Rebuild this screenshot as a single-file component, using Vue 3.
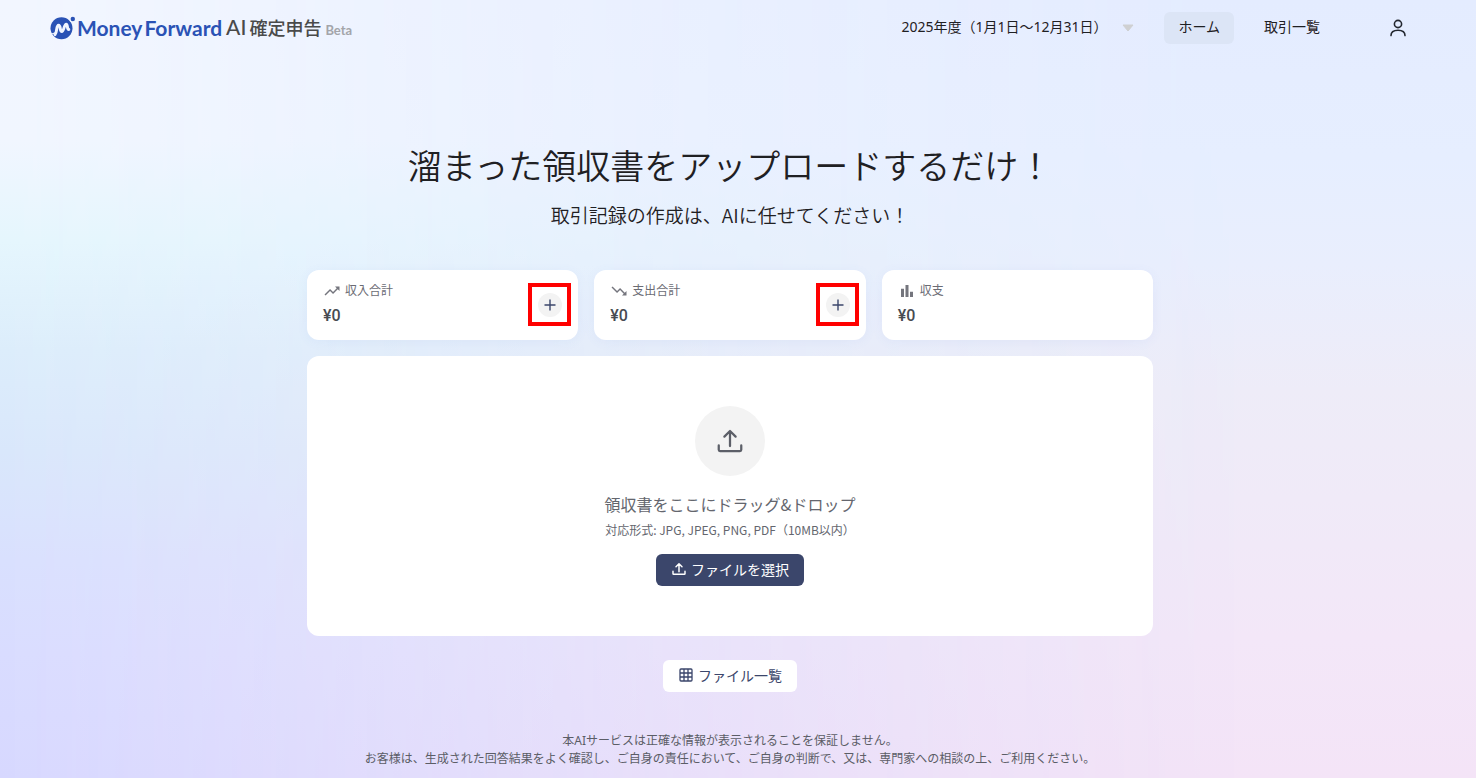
<template>
  <div class="page">
    <header class="header">
      <a href="#" class="brand">
        <svg class="brand-mark" width="26" height="24" viewBox="0 0 26 24">
          <circle cx="11.5" cy="12.2" r="11" fill="#2a52b5" />
          <path d="M5 18.6C7.4 16.4 6 9.2 8.6 9.2c2.4 0 1 6.4 3.2 6.4S14 8.2 16.2 8.2c1.8 0 .6 5.4 2.6 5.2" fill="none" stroke="#f1f5ff" stroke-width="3" stroke-linecap="round" stroke-linejoin="round" />
          <path d="M1.2 18.2l4-1.400" fill="none" stroke="#f1f5ff" stroke-width="1.2" stroke-linecap="round" />
          <circle cx="22.8" cy="3" r="3.4" fill="#f1f5ff" />
          <circle cx="22.8" cy="3" r="2.2" fill="#2a52b5" />
        </svg>
        <span class="brand-name"><span>Money</span><span>Forward</span></span>
        <span class="brand-product"><span class="brand-ai">AI</span>確定申告</span>
        <span class="brand-beta">Beta</span>
      </a>

      <nav class="nav">
        <div class="year">
          <select v-model="year" class="year-select" aria-label="年度">
            <option v-for="y in years" :key="y" :value="y">{{ y }}年度（1月1日〜12月31日）</option>
          </select>
          <svg class="year-arrow" width="12" height="8" viewBox="0 0 12 8"><path d="M1 1h10L6 7z" fill="#cfd0d2" stroke="#cfd0d2" stroke-linejoin="round" /></svg>
        </div>
        <div class="links">
          <a
            v-for="link in links"
            :key="link"
            href="#"
            class="link"
            :class="{ active: link === current }"
            @click.prevent="current = link"
          >{{ link }}</a>
        </div>
        <button type="button" class="account" aria-label="アカウント">
          <svg width="24" height="24" viewBox="0 0 24 24" fill="none" stroke="#23272f" stroke-width="1.6" stroke-linecap="round">
            <circle cx="12" cy="8" r="3.6" />
            <path d="M5 19.6c0-3.6 2.6-5.4 7-5.4s7 1.8 7 5.4" />
          </svg>
        </button>
      </nav>
    </header>

    <main class="main">
      <h1 class="title">溜まった領収書をアップロードするだけ！</h1>
      <p class="subtitle">取引記録の作成は、AIに任せてください！</p>

      <div class="cards">
        <section v-for="card in cards" :key="card.label" class="card">
          <div>
            <h2 class="card-label">
              <svg width="18" height="18" viewBox="0 0 24 24" fill="#74757d"><path :d="card.icon" /></svg>
              {{ card.label }}
            </h2>
            <p class="card-value">¥{{ card.value }}</p>
          </div>
          <button v-if="card.addable" type="button" class="add" :aria-label="card.label + 'を追加'">
            <svg width="14" height="14" viewBox="0 0 14 14" fill="none" stroke="#3b466b" stroke-width="1.4"><path d="M7 1.5v11M1.5 7h11" /></svg>
          </button>
        </section>
      </div>

      <section class="dropzone">
        <div class="drop-icon">
          <svg width="30" height="30" viewBox="0 0 24 24" fill="none" stroke="#5c5f68" stroke-width="1.8" stroke-linejoin="round" stroke-linecap="round"><path :d="uploadIcon" /></svg>
        </div>
        <p class="drop-text">領収書をここにドラッグ&amp;ドロップ</p>
        <p class="drop-formats">対応形式: JPG, JPEG, PNG, PDF（10MB以内）</p>
        <button type="button" class="btn btn-primary">
          <svg width="16" height="16" viewBox="0 0 24 24" fill="none" stroke="#fff" stroke-width="2.2" stroke-linejoin="round" stroke-linecap="round"><path :d="uploadIcon" /></svg>
          ファイルを選択
        </button>
      </section>

      <button type="button" class="btn btn-files">
        <svg width="16" height="16" viewBox="0 0 16 16" fill="none" stroke="#3b466b" stroke-width="1.3">
          <rect x="2" y="2" width="12" height="12" rx="1" />
          <path d="M6 2v12M10 2v12M2 6h12M2 10h12" />
        </svg>
        ファイル一覧
      </button>
    </main>

    <footer class="footer">
      <p>本AIサービスは正確な情報が表示されることを保証しません。</p>
      <p>お客様は、生成された回答結果をよく確認し、ご自身の責任において、ご自身の判断で、又は、専門家への相談の上、ご利用ください。</p>
    </footer>
  </div>
</template>

<script setup>
import { ref } from 'vue'

const years = [2025, 2024]
const year = ref(2025)

const links = ['ホーム', '取引一覧']
const current = ref('ホーム')

const cards = [
  {
    label: '収入合計',
    value: 0,
    addable: true,
    icon: 'M16 6l2.3 2.3-4.9 4.9-4-4L2 16.6 3.4 18l6-6 4 4 6.3-6.3L22 12V6z'
  },
  {
    label: '支出合計',
    value: 0,
    addable: true,
    icon: 'M16 18l2.3-2.3-4.9-4.9-4 4L2 7.4 3.4 6l6 6 4-4 6.3 6.3L22 12v6z'
  },
  {
    label: '収支',
    value: 0,
    addable: false,
    icon: 'M4 9h4v11H4zm6-5h4v16h-4zm6 9h4v7h-4z'
  }
]

const uploadIcon = 'M12 16V4.5M7.5 8.5L12 4l4.5 4.5M3 15.5V19a1 1 0 0 0 1 1h16a1 1 0 0 0 1-1v-3.5'
</script>

<style>
body {
  margin: 0;
}
</style>

<style scoped>
.page {
  position: relative;
  z-index: 0;
  box-sizing: border-box;
  min-height: 100vh;
  padding-right: 16px;
  color: #1f2023;
  font-family: "Noto Sans", "Noto Sans CJK JP", sans-serif;
  background: linear-gradient(180deg, #e4ecff 0%, #e6eeff 20%, #e9eefd 34%, #eeecf8 50%, #f0eaf8 64%, #f3e7f8 82%, #f4e4f7 100%);
}

/* cool tones on the left, fading out towards the right edge */
.page::before {
  content: "";
  position: absolute;
  inset: 0;
  z-index: -1;
  background: linear-gradient(180deg, #f2f6ff 0%, #f1f6ff 18%, #e5f6fd 31%, #dcedfb 45%, #d9e7fb 58%, #d9e0fe 72%, #d9dcff 84%, #d7d8ff 100%);
  mask-image: linear-gradient(90deg, #000 0%, rgba(0, 0, 0, 0.4) 45%, transparent 85%);
}

h1,
h2,
p {
  margin: 0;
  font-weight: 400;
}

button {
  border: 0;
  padding: 0;
  font: inherit;
  cursor: pointer;
}

.header {
  display: flex;
  align-items: center;
  justify-content: space-between;
  height: 56px;
  padding: 0 46px 0 50px;
}

.brand {
  display: flex;
  align-items: center;
  text-decoration: none;
}

.brand-mark {
  margin-right: 1px;
}

.brand-name {
  display: flex;
  gap: 2px;
  color: #2a52b5;
  font-family: Lato, sans-serif;
  font-size: 21px;
  font-weight: 700;
  line-height: 24px;
}

.brand-product {
  display: flex;
  align-items: baseline;
  gap: 3px;
  margin-left: 4px;
  padding-bottom: 3px;
  color: #4a4a4a;
  font-family: "Noto Sans CJK JP", sans-serif;
  font-size: 18px;
  font-weight: 500;
  line-height: 24px;
}

.brand-ai {
  font-family: Lato, sans-serif;
  font-size: 21px;
}

.brand-beta {
  align-self: flex-end;
  margin-left: 4px;
  padding-bottom: 2px;
  color: #a3a5aa;
  font-family: Lato, sans-serif;
  font-size: 13px;
  font-weight: 700;
  line-height: 20px;
}

.nav {
  display: flex;
  align-items: center;
}

.year {
  position: relative;
  margin-right: 30px;
}

.year-select {
  appearance: none;
  border: 0;
  padding: 0 26px 2px 0;
  background: transparent;
  color: inherit;
  font: inherit;
  font-size: 14px;
  line-height: 30px;
}

.year-arrow {
  position: absolute;
  top: 50%;
  right: 0;
  transform: translateY(-50%);
  pointer-events: none;
}

.links {
  display: flex;
  gap: 16px;
  margin-right: 48px;
}

.link {
  padding: 0 14px 2px;
  border-radius: 6px;
  color: inherit;
  font-size: 14px;
  line-height: 30px;
  text-decoration: none;
}

.link.active {
  background: #dce5f6;
}

.account {
  display: flex;
  align-items: center;
  justify-content: center;
  width: 32px;
  height: 32px;
  background: transparent;
}

.main {
  display: flex;
  flex-direction: column;
  align-items: center;
  box-sizing: border-box;
  max-width: 878px;
  margin: 0 auto;
  padding: 84px 16px 0;
}

.title {
  font-family: "Noto Sans CJK JP", sans-serif;
  font-size: 34px;
  font-weight: 350;
  line-height: 50px;
}

.subtitle {
  margin-top: 10px;
  font-family: "Noto Sans CJK JP", sans-serif;
  font-size: 19px;
  font-weight: 350;
  line-height: 30px;
}

.cards {
  display: grid;
  grid-template-columns: repeat(3, 1fr);
  gap: 16px;
  width: 100%;
  margin-top: 40px;
}

.card {
  display: flex;
  align-items: center;
  justify-content: space-between;
  padding: 12px 16px;
  border-radius: 12px;
  background: #fff;
  box-shadow: 0 2px 12px rgba(80, 120, 220, 0.06);
}

.card-label {
  display: flex;
  align-items: center;
  gap: 4px;
  color: #6b6c74;
  font-size: 12px;
  line-height: 18px;
}

.card-value {
  margin-top: 4px;
  color: #484b52;
  font-family: Roboto, sans-serif;
  font-size: 16px;
  font-weight: 500;
  line-height: 24px;
}

.add {
  position: relative;
  display: flex;
  align-items: center;
  justify-content: center;
  width: 24px;
  height: 24px;
  border-radius: 50%;
  background: #f3f3f3;
}

/* highlight frame around the add button */
.add::after {
  content: "";
  position: absolute;
  inset: -10px -9px -9px -10px;
  border: 4px solid #f00;
}

.dropzone {
  display: flex;
  flex-direction: column;
  align-items: center;
  box-sizing: border-box;
  width: 100%;
  margin-top: 16px;
  padding: 50px 16px;
  border-radius: 12px;
  background: #fff;
  color: #64666e;
  font-family: "Noto Sans CJK JP", sans-serif;
}

.drop-icon {
  display: flex;
  align-items: center;
  justify-content: center;
  width: 70px;
  height: 70px;
  border-radius: 50%;
  background: #f3f3f3;
}

.drop-text {
  margin-top: 16px;
  font-size: 16px;
  line-height: 24px;
}

.drop-formats {
  margin-top: 4px;
  font-size: 12px;
  line-height: 20px;
}

.btn {
  display: flex;
  align-items: center;
  justify-content: center;
  gap: 4px;
  box-sizing: border-box;
  height: 32px;
  padding: 0 15px 3px;
  border-radius: 6px;
  font-size: 14px;
}

.btn-primary {
  margin-top: 14px;
  background: #3b466b;
  color: #fff;
}

.btn-files {
  margin-top: 24px;
  background: #fff;
  color: #3b466b;
}

.footer {
  padding: 40px 16px 10px;
  color: #5b5d66;
  font-size: 12px;
  line-height: 18px;
  text-align: center;
}
</style>
